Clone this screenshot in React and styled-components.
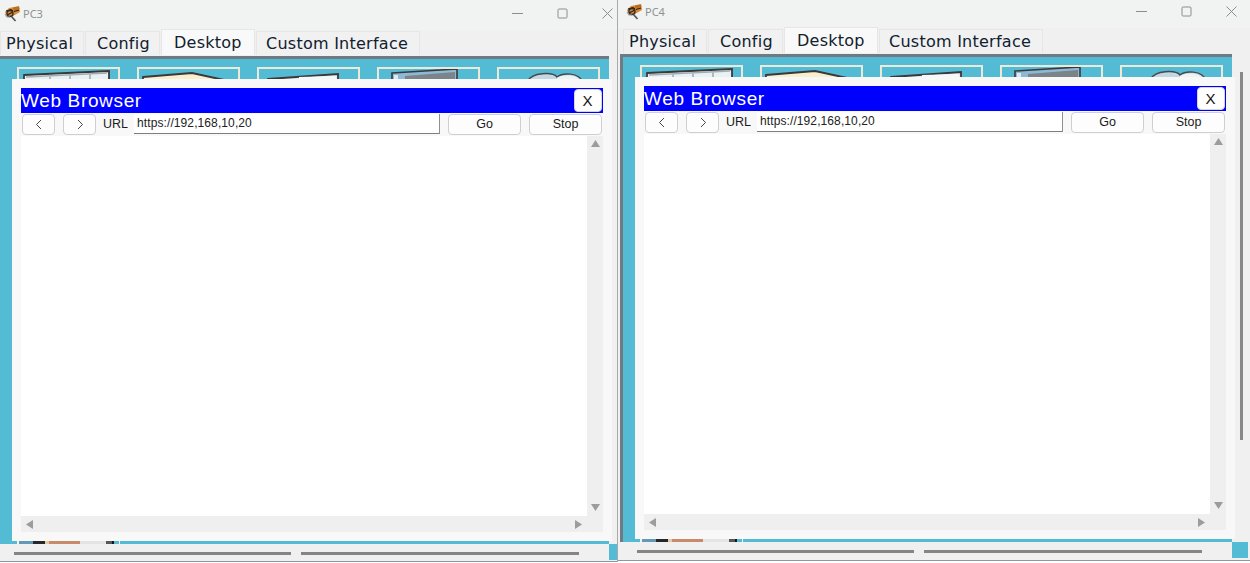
import React from 'react';
import styled, { createGlobalStyle } from 'styled-components';

const Global = createGlobalStyle`
  html, body { margin: 0; padding: 0; background: #ffffff; overflow: hidden; }
  * { box-sizing: border-box; }
`;

const Screen = styled.div`
  display: flex;
  align-items: flex-start;
  width: 1250px;
  height: 563px;
  overflow: hidden;
  background: #ffffff;
`;

const Win = styled.section`
  display: flex;
  flex-direction: column;
  flex: none;
  width: ${p => p.$width}px;
  background: #f0f0f0;
  border-right: ${p => (p.$divider ? '1px solid #a9a9a9' : 'none')};
  font-family: "DejaVu Sans", sans-serif;
`;

const TitleBar = styled.header`
  display: flex;
  align-items: center;
  flex: none;
  height: ${p => p.$height}px;
  padding: 0 ${p => p.$right}px ${p => p.$under}px ${p => p.$left}px;
  background: #f1f3f3;
`;

const TitleText = styled.span`
  margin-left: 2px;
  font: 11px "Noto Sans", sans-serif;
  color: #8f9191;
`;

const Controls = styled.div`
  display: flex;
  align-items: center;
  gap: 34px;
  margin-left: auto;
`;

const TabBar = styled.nav`
  display: flex;
  align-items: flex-end;
  flex: none;
  height: ${p => p.$height}px;
  padding-bottom: 1px;
  padding-left: ${p => p.$left}px;
  background: #f0f0f0;
`;

const Tab = styled.div`
  display: flex;
  align-items: center;
  flex: none;
  width: ${p => p.$w}px;
  height: ${p => (p.$active ? 26 : 24)}px;
  margin-right: 1px;
  padding-left: ${p => p.$text}px;
  font-size: 16px;
  letter-spacing: 0.25px;
  color: #10202e;
  background: ${p => (p.$active ? '#f9f9f9' : '#f1f1f1')};
  border: 1px solid #e6e6e6;
  border-bottom: none;
`;

const Body = styled.div`
  display: flex;
  flex: none;
  height: 488px;
  padding-left: ${p => p.$left}px;
`;

const Desktop = styled.div`
  position: relative;
  z-index: 1;
  display: flex;
  flex-direction: column;
  justify-content: space-between;
  flex: none;
  width: ${p => p.$width}px;
  padding: 8px 0 0 17px;
  background: #53bbd4;
  border-top: 3px solid #6f7b80;
  border-left: ${p => (p.$framed ? '3px solid #6f7b80' : 'none')};
`;

const TileRow = styled.div`
  display: flex;
  gap: 17px;
`;

const Tile = styled.div`
  flex: none;
  width: 103px;
  height: 40px;
  border: 2px solid #ebe9d8;
  border-bottom: none;
`;

const TileArt = styled.svg`
  display: block;
  width: 99px;
  height: 38px;
`;

const Strip = styled.svg`
  display: block;
  flex: none;
  margin-left: -17px;
  width: 120px;
  height: 3px;
`;

const Gutter = styled.aside`
  display: flex;
  justify-content: center;
  flex: 1;
  padding-top: 18px;
  background: #f0f0f0;
`;

const GutterThumb = styled.div`
  width: 3px;
  height: 368px;
  background: #888888;
`;

const Panel = styled.div`
  position: absolute;
  top: 20px;
  left: 12px;
  display: flex;
  flex-direction: column;
  width: 600px;
  height: 462px;
  padding: 9px;
  background: #f8f8f8;
`;

const BlueBar = styled.div`
  display: flex;
  align-items: center;
  justify-content: space-between;
  flex: none;
  height: 25px;
  padding-right: 1px;
  background: #0000ff;
`;

const BlueTitle = styled.span`
  font: 19px "Liberation Sans", Arial, sans-serif;
  letter-spacing: 0.65px;
  color: #ffffff;
`;

const CloseButton = styled.div`
  display: flex;
  align-items: center;
  justify-content: center;
  width: 28px;
  height: 23px;
  padding-right: 1px;
  font: 15px "Liberation Sans", Arial, sans-serif;
  color: #111111;
  background: #ffffff;
  border: 1px solid #d6d6d6;
  border-radius: 4px;
`;

const NavRow = styled.div`
  display: flex;
  align-items: flex-start;
  flex: none;
  height: 23px;
  padding: 1px 0 0 1px;
`;

const NavButton = styled.div`
  display: flex;
  align-items: center;
  justify-content: center;
  flex: none;
  width: ${p => p.$w}px;
  height: 21px;
  margin-right: 8px;
  padding-bottom: 1px;
  font: 12.5px "Liberation Sans", Arial, sans-serif;
  color: #1a1a1a;
  background: #fdfdfd;
  border: 1px solid #cfcfcf;
  border-radius: 4px;
`;

const UrlLabel = styled.span`
  flex: none;
  width: 31px;
  margin-left: -1px;
  padding-top: 3px;
  font: 12.5px "Liberation Sans", Arial, sans-serif;
  color: #1c1c1c;
`;

const UrlInput = styled.div`
  flex: none;
  width: 306px;
  height: 20px;
  margin-right: 8px;
  padding: 2px 0 0 3px;
  font: 12px "Liberation Sans", Arial, sans-serif;
  letter-spacing: 0.1px;
  color: #222222;
  background: #ffffff;
  border-right: 1px solid #8f8f8f;
  border-bottom: 1px solid #7f7f7f;
`;

const ContentRow = styled.div`
  display: flex;
  flex: none;
  height: 380px;
`;

const Page = styled.div`
  flex: 1;
  background: #ffffff;
`;

const VScroll = styled.div`
  display: flex;
  flex-direction: column;
  justify-content: space-between;
  align-items: center;
  flex: none;
  width: 16px;
  padding: 4px 0 5px;
  background: #efefef;
`;

const HScroll = styled.div`
  display: flex;
  align-items: center;
  justify-content: space-between;
  flex: none;
  height: 16px;
  padding: 0 21px 0 5px;
  background: #efefef;
`;

const Arrow = styled.svg`
  display: block;
  width: ${p => p.$w}px;
  height: ${p => p.$h}px;
  fill: #9a9c9d;
`;

const BottomBar = styled.footer`
  display: flex;
  flex: none;
  height: ${p => p.$height}px;
  padding-left: ${p => p.$left}px;
  background: #f0f0f0;
  border-bottom: 1px solid #8c99a5;
`;

const BottomThumb = styled.div`
  flex: none;
  width: ${p => p.$w}px;
  height: 2.5px;
  margin: 8px 10px 0 0;
  background: #858585;
`;

const Corner = styled.div`
  flex: none;
  width: ${p => p.$w}px;
  height: 16px;
  margin-left: auto;
  margin-right: ${p => p.$right}px;
  background: #53bbd4;
`;

const AppIcon = () => (
  <svg width="17" height="17" viewBox="0 0 17 17">
    <path d="M1 7 L5 3 L15 1 L16 7 L9 11 L3 12 Z" fill="#d98a3a" />
    <path d="M9 2.5 L15 1.5 L15.5 4 L9.5 5.5 Z" fill="#b8701f" />
    <path d="M2 6 L7 4.5 L9 6 M3 10 L8 7.5 M10 6.5 L15 5" stroke="#2c1c0c" strokeWidth="1.1" fill="none" />
    <circle cx="6" cy="8.5" r="3" fill="none" stroke="#2f2f2f" strokeWidth="1.3" />
    <path d="M1 9 L3 12 L6 12" stroke="#9a9a9a" strokeWidth="1.2" fill="none" />
    <path d="M7.5 11.5 L11.5 16" stroke="#555555" strokeWidth="1.7" />
  </svg>
);

const MinIcon = () => (
  <svg width="11" height="11" viewBox="0 0 11 11"><path d="M0 5.5 H11" stroke="#8c8e8e" strokeWidth="1" /></svg>
);
const MaxIcon = () => (
  <svg width="11" height="11" viewBox="0 0 11 11"><rect x="1" y="1" width="9" height="9" rx="1" fill="none" stroke="#8c8e8e" strokeWidth="1" /></svg>
);
const CloseIcon = () => (
  <svg width="11" height="11" viewBox="0 0 11 11"><path d="M0.5 0.5 L10.5 10.5 M10.5 0.5 L0.5 10.5" stroke="#8c8e8e" strokeWidth="1" /></svg>
);

const Chevron = ({ flip }) => (
  <svg width="8" height="11" viewBox="0 0 8 11">
    <path d={flip ? 'M2 1 L6.5 5.5 L2 10' : 'M6 1 L1.5 5.5 L6 10'} fill="none" stroke="#333" strokeWidth="0.9" />
  </svg>
);

const arts = [
  <g key="a">
    <path d="M5 6 L90 2 V38 H5 Z" fill="#e8f1f3" stroke="#3c383a" strokeWidth="1.8" />
    <path d="M7 8 L88 4 M31 7 V38 M51 6 V38 M71 5 V38" stroke="#a2adb1" strokeWidth="1.6" fill="none" />
  </g>,
  <g key="b">
    <path d="M4 8 L53 4 L90 12 V38 H4 Z" fill="#f9efcc" stroke="#3c383a" strokeWidth="1.8" />
  </g>,
  <g key="c">
    <path d="M9 10 L79 5 V38 H9 Z" fill="#dceef3" stroke="#3c383a" strokeWidth="1.8" />
    <path d="M40 8 L77 7 V38 H40 Z" fill="#f3f8fa" />
  </g>,
  <g key="d">
    <path d="M13 4 L78 0 V38 H13 Z" fill="#8db9d6" stroke="#3c383a" strokeWidth="1.6" />
    <path d="M26 7 L76 3 V38 H26 Z" fill="#7b8488" />
    <path d="M17 6 V38" stroke="#d8ecf4" strokeWidth="4" />
  </g>,
  <g key="e">
    <path d="M29 12 C33 3 54 3 58 8 C64 3 80 4 83 12 V38 H29 Z" fill="#c3d8e3" stroke="#474a4d" strokeWidth="1.5" />
    <path d="M58 9 C64 5 79 6 81 12 V38 H58 Z" fill="#eef3f5" />
  </g>
];

const Screens = () => (
  <TileRow>
    {arts.map((art, i) => (
      <Tile key={i}>
        <TileArt viewBox="0 0 99 38">{art}</TileArt>
      </Tile>
    ))}
  </TileRow>
);

const BottomStrip = () => (
  <Strip viewBox="0 0 120 3" preserveAspectRatio="none">
    <rect x="17" width="2" height="3" fill="#f4f4f4" />
    <rect x="19" width="14" height="3" fill="#6199b6" />
    <rect x="33" width="12" height="3" fill="#23282b" />
    <rect x="45" width="4" height="3" fill="#e7c9a2" />
    <rect x="49" width="31" height="3" fill="#c98a6c" />
    <rect x="80" width="26" height="3" fill="#e4e4e4" />
    <rect x="106" width="6" height="3" fill="#55585a" />
    <rect x="112" width="2" height="3" fill="#15181a" />
    <rect x="119" width="1" height="3" fill="#f4f4f4" />
  </Strip>
);

const Browser = () => (
  <Panel>
    <BlueBar>
      <BlueTitle>Web Browser</BlueTitle>
      <CloseButton>X</CloseButton>
    </BlueBar>
    <NavRow>
      <NavButton $w={33}><Chevron /></NavButton>
      <NavButton $w={33}><Chevron flip /></NavButton>
      <UrlLabel>URL</UrlLabel>
      <UrlInput>https://192,168,10,20</UrlInput>
      <NavButton $w={73}>Go</NavButton>
      <NavButton $w={73}>Stop</NavButton>
    </NavRow>
    <ContentRow>
      <Page />
      <VScroll>
        <Arrow $w={9} $h={7} viewBox="0 0 9 7"><path d="M4.5 0 L9 7 H0 Z" /></Arrow>
        <Arrow $w={9} $h={7} viewBox="0 0 9 7"><path d="M0 0 H9 L4.5 7 Z" /></Arrow>
      </VScroll>
    </ContentRow>
    <HScroll>
      <Arrow $w={7} $h={9} viewBox="0 0 7 9"><path d="M7 0 V9 L0 4.5 Z" /></Arrow>
      <Arrow $w={7} $h={9} viewBox="0 0 7 9"><path d="M0 0 L7 4.5 L0 9 Z" /></Arrow>
    </HScroll>
  </Panel>
);

const PcWindow = ({ name, width, divider, titleH, under, titleLeft, right, tabsLeft, bodyLeft, desktopW, framed, thumb, bottomLeft, cornerW, cornerRight, bottomH }) => (
  <Win $width={width} $divider={divider}>
    <TitleBar $height={titleH} $under={under} $left={titleLeft} $right={right}>
      <AppIcon />
      <TitleText>{name}</TitleText>
      <Controls>
        <MinIcon />
        <MaxIcon />
        <CloseIcon />
      </Controls>
    </TitleBar>
    <TabBar $height={26} $left={tabsLeft}>
      <Tab $w={84} $text={5}>Physical</Tab>
      <Tab $w={75} $text={11}>Config</Tab>
      <Tab $w={94} $active $text={12}>Desktop</Tab>
      <Tab $w={164} $text={9}>Custom Interface</Tab>
    </TabBar>
    <Body $left={bodyLeft}>
      <Desktop $width={desktopW} $framed={framed}>
        <Screens />
        <BottomStrip />
        <Browser />
      </Desktop>
      <Gutter>{thumb && <GutterThumb />}</Gutter>
    </Body>
    <BottomBar $height={bottomH} $left={bottomLeft}>
      <BottomThumb $w={277} />
      <BottomThumb $w={278} />
      <Corner $w={cornerW} $right={cornerRight} />
    </BottomBar>
  </Win>
);

export default function App() {
  return (
    <Screen>
      <Global />
      <PcWindow name="PC3" width={618} divider titleH={30} under={4} titleLeft={4} right={4} tabsLeft={0} bodyLeft={0} desktopW={609} bottomLeft={14} cornerW={8} cornerRight={0} bottomH={18} />
      <PcWindow name="PC4" width={632} titleH={28} under={6} titleLeft={8} right={13} tabsLeft={5} bodyLeft={2} desktopW={612} framed thumb bottomLeft={19} cornerW={16} cornerRight={2} bottomH={19} />
    </Screen>
  );
}
